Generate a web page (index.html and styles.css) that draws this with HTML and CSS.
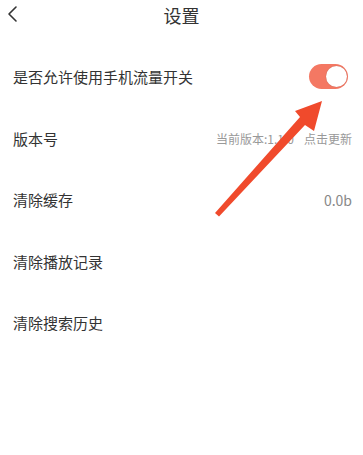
FILE: index.html
```html
<!DOCTYPE html>
<html lang="zh">
<head>
<meta charset="utf-8">
<link rel="stylesheet" href="styles.css">
</head>
<body>
<div class="page">
  <header class="topbar">
    <span class="back">
      <svg width="12" height="18" viewBox="0 0 12 18"><path d="M9 2 L2 9 L9 16" fill="none" stroke="#333" stroke-width="1.6" stroke-linecap="round" stroke-linejoin="round"/></svg>
    </span>
    <h1 class="title">设置</h1>
  </header>
  <ul class="list">
    <li class="row">
      <span class="label">是否允许使用手机流量开关</span>
      <span class="switch"><span class="knob"></span></span>
    </li>
    <li class="row">
      <span class="label">版本号</span>
      <span class="meta"><span>当前版本:1.1.0</span><span>点击更新</span></span>
    </li>
    <li class="row">
      <span class="label">清除缓存</span>
      <span class="meta value">0.0b</span>
    </li>
    <li class="row">
      <span class="label">清除播放记录</span>
    </li>
    <li class="row">
      <span class="label">清除搜索历史</span>
    </li>
  </ul>
  <svg class="arrow" width="363" height="455" viewBox="0 0 363 455">
    <path d="M215 213 L219 216.5 L305 125 L314 131 L322 101 L295 111 L300 117 Z" fill="#f04a2c"/>
  </svg>
</div>
</body>
</html>
```
FILE: styles.css
```css
html, body {
  margin: 0;
  padding: 0;
  background: #fff;
}
body {
  font-family: "Noto Sans CJK SC", "Noto Sans", sans-serif;
  color: #333;
}
.page {
  position: relative;
  width: 363px;
  height: 455px;
  overflow: hidden;
}
.topbar {
  height: 30px;
  display: flex;
  align-items: center;
  justify-content: center;
  position: relative;
}
.back {
  position: absolute;
  left: 7px;
  top: 5px;
  display: flex;
}
.title {
  margin: 0;
  font-size: 18px;
  font-weight: 400;
  color: #333;
  line-height: 30px;
}
.list {
  list-style: none;
  margin: 16px 0 0;
  padding: 0 11px 0 13px;
}
.row {
  height: 61.5px;
  display: flex;
  align-items: center;
  justify-content: space-between;
}
.label {
  font-size: 15px;
  color: #333;
}
.switch {
  width: 39px;
  height: 25px;
  border-radius: 13px;
  background: #f47863;
  display: flex;
  align-items: center;
  justify-content: flex-end;
  padding: 0 1px;
  box-sizing: border-box;
  margin-right: 4px;
}
.knob {
  width: 21px;
  height: 21px;
  border-radius: 50%;
  background: #fff;
  box-shadow: 0 0 1px rgba(0,0,0,0.3);
}
.meta {
  font-size: 12px;
  color: #999;
  display: flex;
  gap: 10px;
}
.value {
  font-size: 14px;
  color: #888;
}
.arrow {
  position: absolute;
  left: 0;
  top: 0;
  pointer-events: none;
}
```
